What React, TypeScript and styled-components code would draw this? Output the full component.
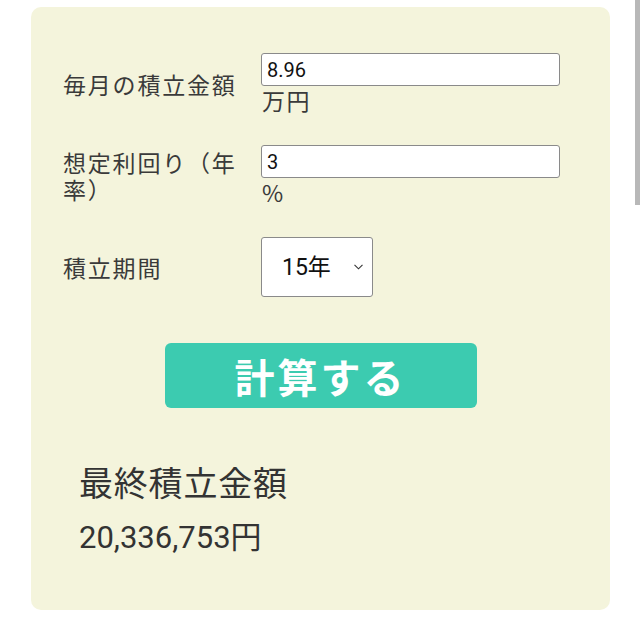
import React, { useState } from "react";
import styled, { createGlobalStyle } from "styled-components";

const Global = createGlobalStyle`
  html, body { margin: 0; padding: 0; background: #ffffff; }
  body { font-family: "Noto Sans CJK JP", "Noto Sans", sans-serif; color: #333; }
`;

const Page = styled.div`
  padding: 7px 30px 22px 31px;
`;

const Card = styled.div`
  background: #f4f4dc;
  border-radius: 10px;
  padding: 46px 50px 50px 32px;
  display: flex;
  flex-direction: column;
`;

const Form = styled.div`
  display: flex;
  flex-direction: column;
  gap: 30px;
`;

const Row = styled.div`
  display: grid;
  grid-template-columns: 182px 1fr;
  column-gap: 16px;
  align-items: center;
`;

const Label = styled.div`
  font-size: 23px;
  letter-spacing: 1.8px;
  line-height: 27px;
  color: #3a3a3a;
`;

const Field = styled.div`
  display: flex;
  flex-direction: column;
  align-items: flex-start;
`;

const TextInput = styled.input`
  box-sizing: border-box;
  width: 299px;
  height: 33px;
  border: 1px solid #8a8a8a;
  border-radius: 3px;
  background: #fff;
  padding: 0 5px;
  font-family: "Roboto", "Noto Sans", sans-serif;
  font-size: 20px;
  color: #111;
  outline: none;
`;

const Unit = styled.div`
  font-size: 23px;
  letter-spacing: 1.6px;
  line-height: 29px;
  color: #3a3a3a;
  padding-left: 1px;
`;

const SelectWrap = styled.div`
  position: relative;
  width: 112px;
  height: 60px;
`;

const Select = styled.select`
  appearance: none;
  -webkit-appearance: none;
  box-sizing: border-box;
  width: 100%;
  height: 100%;
  border: 1px solid #8a8a8a;
  border-radius: 3px;
  background: #fff;
  padding: 0 0 0 20px;
  font-family: "Roboto", "Noto Sans CJK JP", sans-serif;
  font-size: 23px;
  color: #111;
  outline: none;
`;

const Chevron = styled.svg`
  position: absolute;
  right: 10px;
  top: 27px;
  pointer-events: none;
`;

const Button = styled.button`
  align-self: center;
  margin: 46px 0 0 18px;
  width: 312px;
  height: 65px;
  border: none;
  border-radius: 6px;
  background: #3ccbb0;
  color: #fff;
  font-family: "Noto Sans CJK JP", sans-serif;
  font-weight: 700;
  font-size: 40px;
  letter-spacing: 3px;
  cursor: pointer;
`;

const Result = styled.div`
  margin-top: 52px;
  padding-left: 16px;
  display: flex;
  flex-direction: column;
  gap: 12px;
`;

const ResultTitle = styled.div`
  font-size: 34px;
  letter-spacing: 0.8px;
  line-height: 44px;
  color: #333;
`;

const ResultValue = styled.div`
  font-family: "Roboto", "Noto Sans CJK JP", sans-serif;
  font-size: 31px;
  line-height: 44px;
  color: #333;
`;

const ScrollThumb = styled.div`
  position: fixed;
  right: 0;
  top: 0;
  width: 5px;
  height: 205px;
  background: #b8b8b8;
`;

export default function App() {
  const [monthly, setMonthly] = useState("8.96");
  const [rate, setRate] = useState("3");
  const [years, setYears] = useState("15");

  return (
    <>
      <Global />
      <Page>
        <Card>
          <Form>
            <Row>
              <Label>毎月の積立金額</Label>
              <Field>
                <TextInput value={monthly} onChange={(e) => setMonthly(e.target.value)} />
                <Unit>万円</Unit>
              </Field>
            </Row>
            <Row>
              <Label>想定利回り（年率）</Label>
              <Field>
                <TextInput value={rate} onChange={(e) => setRate(e.target.value)} />
                <Unit>%</Unit>
              </Field>
            </Row>
            <Row>
              <Label>積立期間</Label>
              <Field>
                <SelectWrap>
                  <Select value={years} onChange={(e) => setYears(e.target.value)}>
                    {[5, 10, 15, 20, 25, 30].map((y) => (
                      <option key={y} value={String(y)}>
                        {y}年
                      </option>
                    ))}
                  </Select>
                  <Chevron width="9" height="6" viewBox="0 0 9 6">
                    <path d="M0.5 0.8 L4.5 4.8 L8.5 0.8" fill="none" stroke="#333" strokeWidth="1.1" />
                  </Chevron>
                </SelectWrap>
              </Field>
            </Row>
          </Form>
          <Button>計算する</Button>
          <Result>
            <ResultTitle>最終積立金額</ResultTitle>
            <ResultValue>20,336,753円</ResultValue>
          </Result>
        </Card>
      </Page>
      <ScrollThumb />
    </>
  );
}
